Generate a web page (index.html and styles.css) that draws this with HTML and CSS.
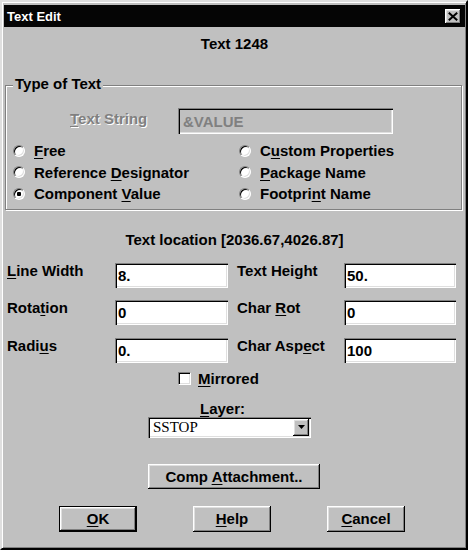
FILE: index.html
```html
<!DOCTYPE html>
<html lang="en">
<head>
<meta charset="UTF-8">
<title>Text Edit</title>
<link rel="stylesheet" href="styles.css">
</head>
<body>
<div class="dlg">
    <div class="caption">
        <span>Text Edit</span>
        <span class="close-btn">
            <svg width="10" height="9" viewBox="0 0 10 9"><path d="M0.8 0.8 L9.2 8.2 M9.2 0.8 L0.8 8.2" stroke="#000" stroke-width="2"/></svg>
        </span>
    </div>
    <div class="client">
        <div class="heading">Text 1248</div>

        <div class="group">
            <div class="legend">Type of Text</div>
            <div class="str-row">
                <span class="str-label disabled"><u>T</u>ext String</span>
                <span class="edit readonly">&amp;VALUE</span>
            </div>
            <div class="radios">
                <div class="radio"><span class="knob"></span><span><u>F</u>ree</span></div>
                <div class="radio"><span class="knob"></span><span>C<u>u</u>stom Properties</span></div>
                <div class="radio"><span class="knob"></span><span>Reference <u>D</u>esignator</span></div>
                <div class="radio"><span class="knob"></span><span><u>P</u>ackage Name</span></div>
                <div class="radio"><span class="knob on"></span><span>Component <u>V</u>alue</span></div>
                <div class="radio"><span class="knob"></span><span>Footpri<u>n</u>t Name</span></div>
            </div>
        </div>

        <div class="location">Text location [2036.67,4026.87]</div>

        <div class="fields">
            <span class="flabel"><u>L</u>ine Width</span>
            <span class="edit">8.</span>
            <span class="flabel right">Text Height</span>
            <span class="edit">50.</span>

            <span class="flabel">Rota<u>t</u>ion</span>
            <span class="edit">0</span>
            <span class="flabel right">Char <u>R</u>ot</span>
            <span class="edit">0</span>

            <span class="flabel">Radi<u>u</u>s</span>
            <span class="edit">0.</span>
            <span class="flabel right">Char Asp<u>e</u>ct</span>
            <span class="edit">100</span>
        </div>

        <div class="check-row"><span class="checkbox"></span><span><u>M</u>irrored</span></div>

        <div class="layer">
            <div class="layer-label"><u>L</u>ayer:</div>
            <div class="combo">
                <span class="combo-text">SSTOP</span>
                <span class="combo-btn">
                    <svg width="7" height="4" viewBox="0 0 7 4"><path d="M0 0 H7 L3.5 4 Z" fill="#000"/></svg>
                </span>
            </div>
        </div>

        <div class="btn wide"><span>Comp <u>A</u>ttachment..</span></div>

        <div class="btn-row">
            <div class="btn default"><span><u>O</u>K</span></div>
            <div class="btn"><span><u>H</u>elp</span></div>
            <div class="btn"><span><u>C</u>ancel</span></div>
        </div>
    </div>
</div>
</body>
</html>
```

FILE: styles.css
```css
body {
    margin: 0;
    background: #fff;
    color: #000;
    font-family: "Liberation Sans", Arial, sans-serif;
    font-size: 15px;
    font-weight: bold;
}
u { text-underline-offset: 2px; }

.dlg {
    box-sizing: border-box;
    width: 468px;
    height: 550px;
    background: #c0c0c0;
    border: 2px solid;
    border-color: #dfdfdf #000 #000 #dfdfdf;
    box-shadow: inset 1px 1px #fff, inset -1px -1px #808080;
    padding: 3px 1px 2px 2px;
    display: flex;
    flex-direction: column;
}

/* title bar */
.caption {
    height: 22px;
    background: #050505;
    color: #fff;
    font-size: 13px;
    display: flex;
    align-items: center;
    justify-content: space-between;
    padding: 0 4px 0 3px;
}
.close-btn {
    width: 16px;
    height: 15px;
    background: #c0c0c0;
    box-shadow: inset -1px -1px #000, inset 1px 1px #fff, inset -2px -2px #808080, inset 2px 2px #dfdfdf;
    display: flex;
    align-items: center;
    justify-content: center;
}

.client {
    flex: 1;
    display: flex;
    flex-direction: column;
}
.heading {
    text-align: center;
    line-height: 18px;
    margin-top: 8px;
}

/* group box */
.group {
    box-sizing: border-box;
    width: 457px;
    margin: 32px 0 0 1px;
    border: 1px solid #808080;
    box-shadow: inset 1px 1px #fff, 1px 1px #fff;
    padding: 0 0 4px 0;
}
.legend {
    width: fit-content;
    margin: -11px 0 0 7px;
    padding: 0 2px;
    line-height: 18px;
    background: #c0c0c0;
}
.str-row {
    display: flex;
    align-items: flex-start;
    margin-top: 15px;
    padding-left: 64px;
}
.str-label {
    width: 108px;
    line-height: 18px;
    margin-top: 2px;
}
.disabled {
    color: #808080;
    text-shadow: 1px 1px #fff;
}
.radios {
    display: grid;
    grid-template-columns: 226px auto;
    grid-auto-rows: 21.5px;
    margin-top: 6px;
    padding-left: 7px;
}
.radio {
    display: flex;
    align-items: center;
    gap: 9px;
}
.knob {
    box-sizing: border-box;
    width: 12px;
    height: 12px;
    border-radius: 50%;
    background: #fff;
    border: 1px solid;
    border-color: #808080 #fff #fff #808080;
    box-shadow: inset 1px 1px #000, inset -1px -1px #dfdfdf;
}
.knob.on { background: radial-gradient(circle, #000 2px, #fff 2.5px); }

/* edit boxes */
.edit {
    box-sizing: border-box;
    display: flex;
    align-items: center;
    background: #fff;
    padding-left: 3px;
    box-shadow: inset 1px 1px #808080, inset 2px 2px #000, inset -1px -1px #fff, inset -2px -2px #dfdfdf;
}
.edit.readonly {
    width: 215px;
    height: 26px;
    padding-left: 5px;
    background: #c0c0c0;
    color: #808080;
}

.location {
    text-align: center;
    line-height: 18px;
    margin-top: 21px;
}
.fields {
    display: grid;
    grid-template-columns: 108px 113px 116px 112px;
    grid-auto-rows: 25px;
    row-gap: 12.5px;
    margin-top: 14px;
    padding-left: 3px;
}
.flabel {
    line-height: 18px;
    margin-top: -1px;
}
.flabel.right { padding-left: 9px; }

.check-row {
    display: flex;
    align-items: center;
    gap: 7px;
    line-height: 18px;
    margin-top: 7px;
    padding-left: 174px;
}
.checkbox {
    box-sizing: border-box;
    width: 13px;
    height: 13px;
    background: #fff;
    border: 1px solid;
    border-color: #808080 #fff #fff #808080;
    box-shadow: inset 1px 1px #000, inset -1px -1px #dfdfdf;
}

.layer {
    width: 163px;
    margin: 13px 0 0 144px;
}
.layer-label {
    text-align: center;
    line-height: 16px;
    padding-right: 14px;
}
.combo {
    box-sizing: border-box;
    height: 21px;
    display: flex;
    align-items: center;
    justify-content: space-between;
    background: #fff;
    padding: 0 2px 0 5px;
    box-shadow: inset 1px 1px #808080, inset 2px 2px #000, inset -1px -1px #fff, inset -2px -2px #dfdfdf;
}
.combo-text {
    font-family: "Liberation Serif", "Times New Roman", serif;
    font-weight: normal;
    font-size: 15px;
}
.combo-btn {
    width: 16px;
    height: 17px;
    background: #c0c0c0;
    box-shadow: inset -1px -1px #000, inset 1px 1px #fff, inset -2px -2px #808080, inset 2px 2px #dfdfdf;
    display: flex;
    align-items: center;
    justify-content: center;
}

/* push buttons */
.btn {
    box-sizing: border-box;
    width: 78px;
    height: 26px;
    display: flex;
    align-items: center;
    justify-content: center;
    background: #c0c0c0;
    box-shadow: inset -1px -1px #000, inset 1px 1px #fff, inset -2px -2px #808080, inset 2px 2px #dfdfdf;
}
.btn.wide {
    width: 172px;
    height: 25px;
    margin: 26px 0 0 144px;
}
.btn.default {
    border: 1px solid #000;
}
.btn-row {
    display: flex;
    gap: 56px;
    margin-top: 17px;
    padding-left: 55px;
}
```
